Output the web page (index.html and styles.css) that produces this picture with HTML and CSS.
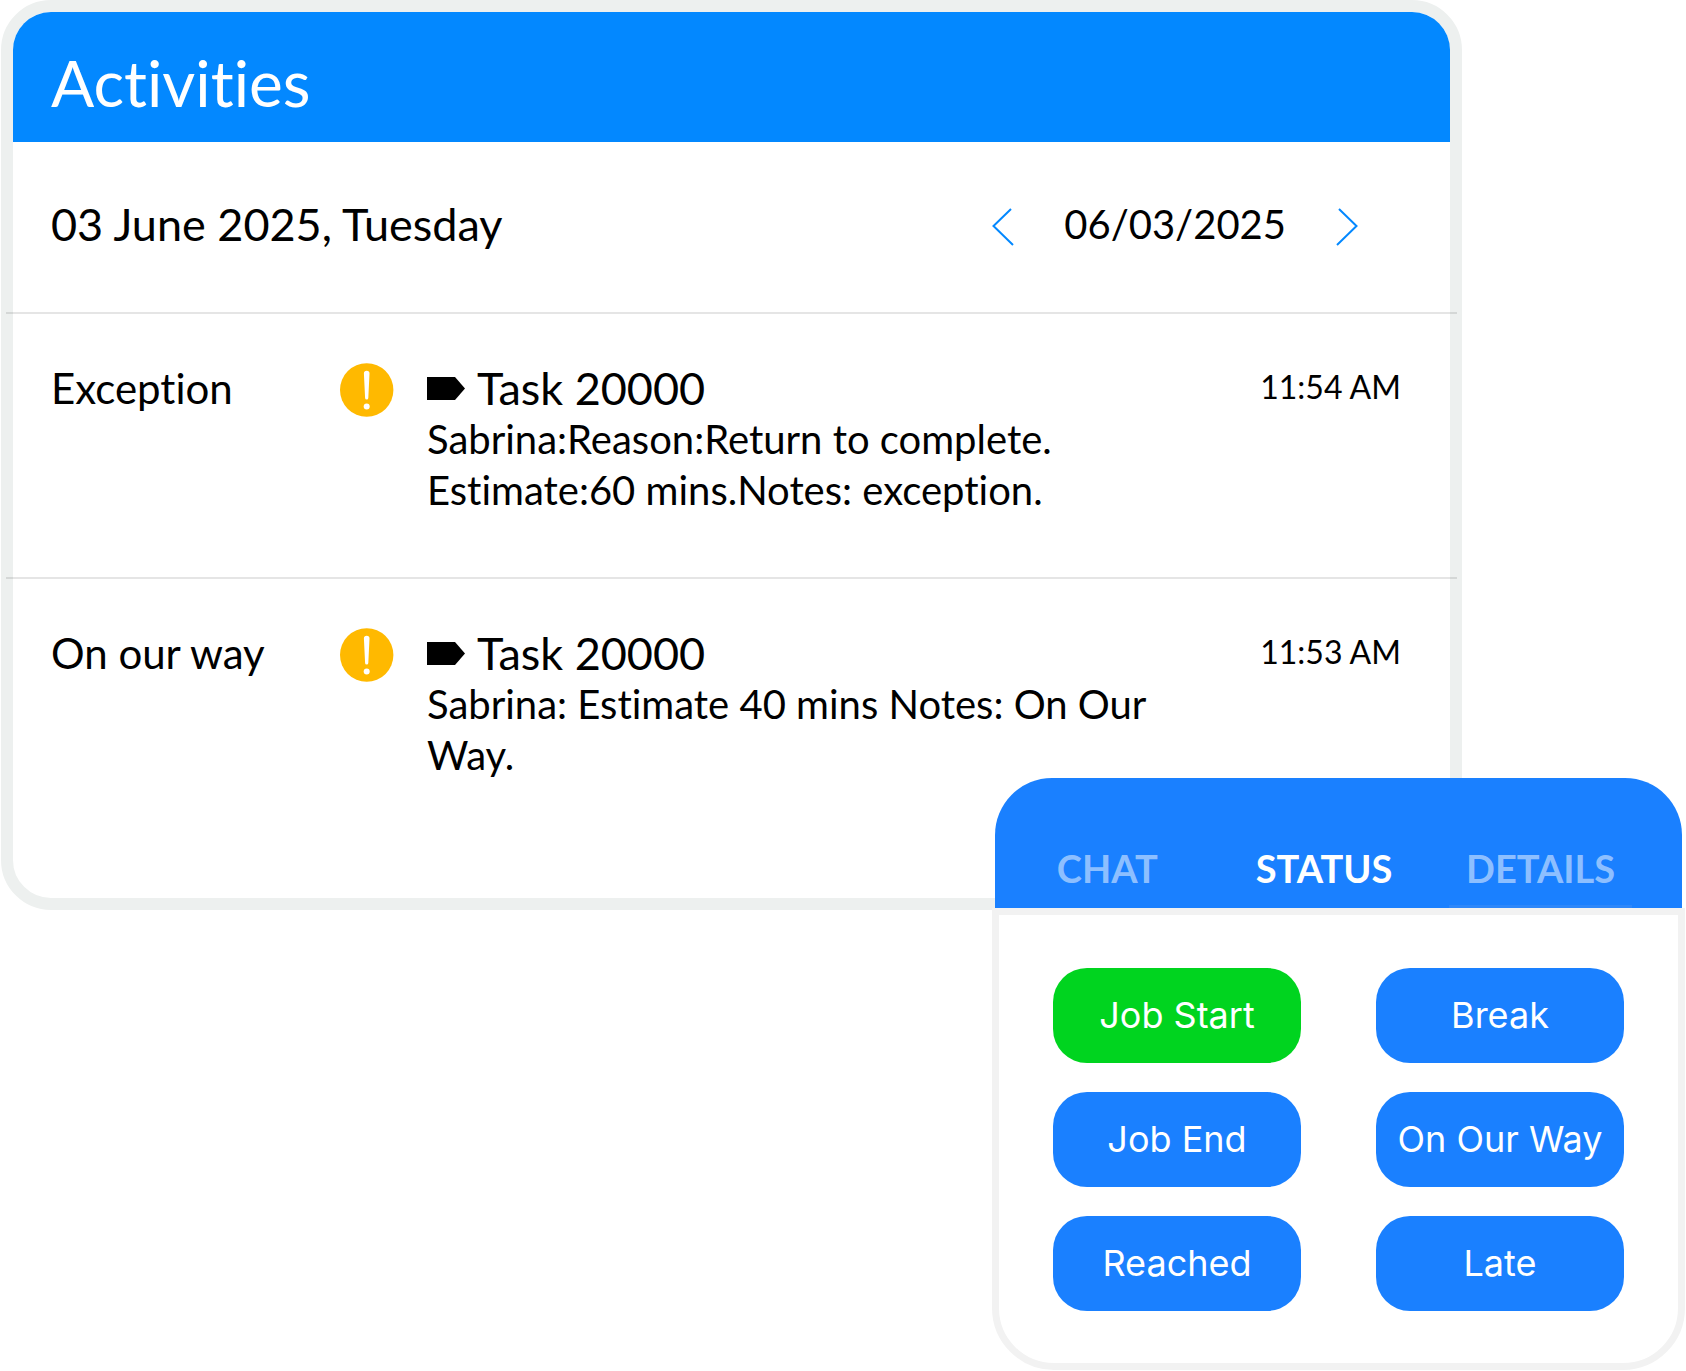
FILE: index.html
```html
<!DOCTYPE html>
<html lang="en">
<head>
<meta charset="utf-8">
<meta name="viewport" content="width=device-width, initial-scale=1">
<title>Activities</title>
<link rel="stylesheet" href="styles.css">
</head>
<body>
<main class="page">
  <section class="activities">
    <header class="activities-header">
      <h1 class="activities-title">Activities</h1>
    </header>
    <div class="date-bar">
      <h2 class="date-heading">03 June 2025, Tuesday</h2>
      <div class="date-picker">
        <button class="date-step" type="button" aria-label="Previous day">
          <svg width="22" height="38" viewBox="0 0 22 38"><path d="M19 1 1.500 18 21 37"/></svg>
        </button>
        <time class="date-value" datetime="2025-06-03">06/03/2025</time>
        <button class="date-step" type="button" aria-label="Next day">
          <svg width="22" height="38" viewBox="0 0 22 38"><path d="M3 1 20.500 18 1 37"/></svg>
        </button>
      </div>
    </div>
    <ul class="activity-list">
      <li class="activity">
        <span class="activity-type">Exception</span>
        <svg class="activity-alert" width="54" height="54" viewBox="0 0 54 54" aria-hidden="true"><circle cx="26.700" cy="27" r="26.700" fill="#ffb900"/><path d="M23.900 10.500a2.800 2.800 0 0 1 5.600 0L28.300 35a1.600 1.600 0 0 1-3.200 0z" fill="#fff"/><circle cx="26.700" cy="43.500" r="3" fill="#fff"/></svg>
        <div class="activity-body">
          <h3 class="activity-task"><svg class="tag" width="38" height="23" viewBox="0 0 38 23" aria-hidden="true"><path d="M0 0h28l10 11.500L28 23H0z"/></svg>Task 20000</h3>
          <p class="activity-text">Sabrina:Reason:Return to complete. Estimate:60 mins.Notes: exception.</p>
        </div>
        <time class="activity-time" datetime="11:54">11:54 AM</time>
      </li>
      <li class="activity">
        <span class="activity-type">On our way</span>
        <svg class="activity-alert" width="54" height="54" viewBox="0 0 54 54" aria-hidden="true"><circle cx="26.700" cy="27" r="26.700" fill="#ffb900"/><path d="M23.900 10.500a2.800 2.800 0 0 1 5.600 0L28.300 35a1.600 1.600 0 0 1-3.200 0z" fill="#fff"/><circle cx="26.700" cy="43.500" r="3" fill="#fff"/></svg>
        <div class="activity-body">
          <h3 class="activity-task"><svg class="tag" width="38" height="23" viewBox="0 0 38 23" aria-hidden="true"><path d="M0 0h28l10 11.500L28 23H0z"/></svg>Task 20000</h3>
          <p class="activity-text">Sabrina: Estimate 40 mins Notes: On Our Way.</p>
        </div>
        <time class="activity-time" datetime="11:53">11:53 AM</time>
      </li>
    </ul>
  </section>

  <section class="status">
    <nav class="tabs">
      <button class="tab" type="button">CHAT</button>
      <button class="tab tab-active" type="button">STATUS</button>
      <button class="tab tab-next" type="button">DETAILS</button>
    </nav>
    <div class="status-options">
      <button class="option option-current" type="button">Job Start</button>
      <button class="option" type="button">Break</button>
      <button class="option" type="button">Job End</button>
      <button class="option" type="button">On Our Way</button>
      <button class="option" type="button">Reached</button>
      <button class="option" type="button">Late</button>
    </div>
  </section>
</main>
</body>
</html>
```

FILE: styles.css
```css
* {
  box-sizing: border-box;
}

body {
  margin: 0;
  background: #fff;
  color: #000;
  font-family: Lato, sans-serif;
  font-variant-ligatures: none;
}

h1, h2, h3, p, ul {
  margin: 0;
  padding: 0;
  font-weight: 400;
}

button {
  padding: 0;
  border: 0;
  background: none;
  cursor: pointer;
}

.page {
  padding: 0 1px;
}

/* Activities card */
.activities {
  margin-right: 223px;
  border: 12px solid #edf0ef;
  border-radius: 50px;
}

.activities-header {
  padding: 33px 38px 21px;
  border-radius: 38px 38px 0 0;
  background: #0388ff;
  color: #fff;
}

.activities-title {
  font-size: 64px;
  line-height: 76px;
}

.date-bar {
  display: flex;
  align-items: center;
  justify-content: space-between;
  padding: 56px 92px 62px 38px;
}

.date-heading {
  font-size: 45px;
  line-height: 52px;
}

.date-picker {
  display: flex;
  align-items: center;
  gap: 50px;
}

.date-value {
  font-size: 40px;
  line-height: 52px;
}

.date-step {
  display: flex;
  padding-top: 5px;
}

.date-step svg {
  fill: none;
  stroke: #0388ff;
  stroke-width: 2;
}

.activity-list {
  margin: 0 -7px;
  list-style: none;
}

.activity {
  display: grid;
  grid-template-columns: 289px 87px 1fr auto;
  padding: 49px 56px 61px 45px;
  border-top: 2px solid rgba(0, 0, 0, 0.1);
}

.activity:last-child {
  padding-bottom: 117px;
}

.activity-type {
  font-size: 42px;
  line-height: 51px;
}

.activity-body {
  max-width: 760px;
}

.activity-task {
  display: flex;
  align-items: center;
  gap: 12px;
  font-size: 45px;
  line-height: 51px;
}

.activity-text {
  font-size: 40px;
  line-height: 51px;
}

.activity-time {
  font-size: 32px;
  line-height: 48px;
}

/* Status card */
.status {
  position: relative;
  width: 693px;
  margin: -132px 0 0 auto;
}

.tabs {
  display: grid;
  grid-template-columns: repeat(3, 1fr);
  margin: 0 3px;
  padding: 66px 33px 0 4px;
  border-radius: 57px 57px 0 0;
  background: #1a80ff;
}

.tab {
  padding-bottom: 16px;
  color: #8dbfff;
  font: 700 38px/48px Lato, sans-serif;
}

.tab-active {
  color: #fff;
}

.tab-next {
  background: linear-gradient(#2d87fa, #2d87fa) center bottom / 183px 3px no-repeat;
}

.status-options {
  display: grid;
  grid-template-columns: 1fr 1fr;
  gap: 29px 75px;
  padding: 53px 54px 52px;
  border: 7px solid #f2f2f2;
  border-radius: 0 0 62px 62px;
  background: #fff;
}

.option {
  height: 95px;
  padding-bottom: 2px;
  border-radius: 34px;
  background: #1a80ff;
  color: #fff;
  font: 400 36px/48px Inter, sans-serif;
}

.option-current {
  background: #00d41f;
}
```
